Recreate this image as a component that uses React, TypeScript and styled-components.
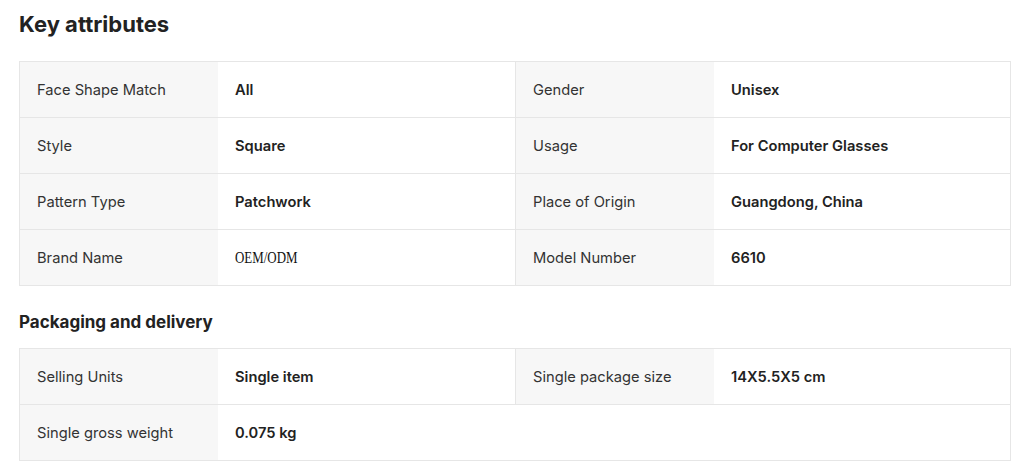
import styled, {createGlobalStyle} from "styled-components";

const GlobalStyle = createGlobalStyle`
  body {
    margin: 0;
    background: #fff;
    font-family: Inter, "Noto Sans", sans-serif;
    color: #222;
  }
`;

type Attr = { label: string; value: string; serif?: boolean };

const keyAttributes: Attr[] = [
    {label: "Face Shape Match", value: "All"},
    {label: "Gender", value: "Unisex"},
    {label: "Style", value: "Square"},
    {label: "Usage", value: "For Computer Glasses"},
    {label: "Pattern Type", value: "Patchwork"},
    {label: "Place of Origin", value: "Guangdong, China"},
    {label: "Brand Name", value: "OEM/ODM", serif: true},
    {label: "Model Number", value: "6610"},
];

const packaging: Attr[] = [
    {label: "Selling Units", value: "Single item"},
    {label: "Single package size", value: "14X5.5X5 cm"},
    {label: "Single gross weight", value: "0.075 kg"},
];

const AttrTable = ({items}: { items: Attr[] }) => (
    <Table>
        {items.map((item, i) => (
            <Pair
                key={item.label}
                $divider={i % 2 === 0 && i !== items.length - 1}
            >
                <Label>{item.label}</Label>
                <Value>
                    {item.serif ? <SerifText>{item.value}</SerifText> : item.value}
                </Value>
            </Pair>
        ))}
        {items.length % 2 === 1 && <Filler/>}
    </Table>
);

export default function App() {
    return (
        <>
            <GlobalStyle/>
            <Wrapper>
                <Title>Key attributes</Title>
                <AttrTable items={keyAttributes}/>
                <SubTitle>Packaging and delivery</SubTitle>
                <AttrTable items={packaging}/>
            </Wrapper>
        </>
    );
}

const Wrapper = styled.div`
  width: 992px;
  padding: 9px 0 0 19px;
`;

const Title = styled.h2`
  margin: 0 0 22px;
  font-size: 22px;
  line-height: 30px;
  font-weight: 700;
  color: #222;
`;

const SubTitle = styled.h3`
  margin: 23px 0 13px;
  font-size: 17px;
  line-height: 26px;
  font-weight: 700;
  color: #222;
`;

const Table = styled.div`
  display: grid;
  grid-template-columns: 496px 1fr;
  border: 1px solid #e6e6e6;
  border-bottom: none;
`;

const Pair = styled.div<{ $divider?: boolean }>`
  display: grid;
  grid-template-columns: 198px 1fr;
  height: 56px;
  box-sizing: border-box;
  border-bottom: 1px solid #e6e6e6;
  border-right: ${(p) => (p.$divider ? "1px solid #e6e6e6" : "none")};
`;

const Filler = styled.div`
  border-bottom: 1px solid #e6e6e6;
`;

const Label = styled.div`
  display: flex;
  align-items: center;
  padding-left: 17px;
  background: #f7f7f7;
  font-size: 14.7px;
  color: #333;
`;

const Value = styled.div`
  display: flex;
  align-items: center;
  padding-left: 17px;
  font-size: 14.7px;
  font-weight: 600;
  color: #222;
`;

const SerifText = styled.span`
  display: inline-block;
  font-family: "Liberation Serif", serif;
  font-size: 17px;
  font-weight: 400;
  color: #111;
  transform: scaleX(0.76);
  transform-origin: left center;
`;
